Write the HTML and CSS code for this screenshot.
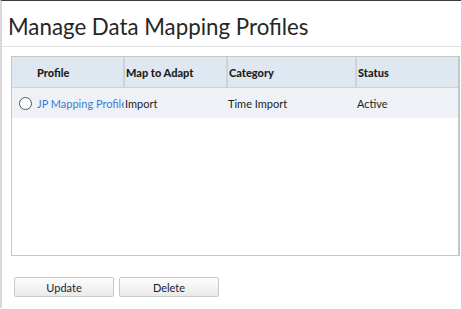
FILE: index.html
```html
<!DOCTYPE html>
<html lang="en">
<head>
    <meta charset="UTF-8">
    <meta name="viewport" content="width=device-width, initial-scale=1.0">
    <title>Manage Data Mapping Profiles</title>
    <link rel="stylesheet" href="styles.css">
</head>
<body>
    <div class="page">
        <h1 class="title">Manage Data Mapping Profiles</h1>
        <div class="content">
            <div class="grid">
                <table class="profiles">
                    <colgroup>
                        <col class="col-radio">
                        <col class="col-profile">
                        <col class="col-map">
                        <col class="col-category">
                        <col class="col-status">
                    </colgroup>
                    <thead>
                        <tr>
                            <th class="no-sep"></th>
                            <th class="no-sep">Profile</th>
                            <th>Map to Adapt</th>
                            <th>Category</th>
                            <th>Status</th>
                        </tr>
                    </thead>
                    <tbody>
                        <tr>
                            <td><span class="radio"></span></td>
                            <td><a href="#" class="link">JP Mapping Profile</a></td>
                            <td>Import</td>
                            <td>Time Import</td>
                            <td>Active</td>
                        </tr>
                    </tbody>
                </table>
            </div>
            <div class="actions">
                <button class="btn">Update</button>
                <button class="btn">Delete</button>
            </div>
        </div>
    </div>
</body>
</html>
```

FILE: styles.css
```css
body {
    margin: 0;
    font-family: Lato, "Open Sans", sans-serif;
    background: #fff;
    color: #222;
}
.page {
    height: 308px;
    border-top: 1px solid #3a3a3a;
    border-left: 2px solid #d9d9d9;
    box-sizing: border-box;
}
.title {
    margin: 0;
    padding: 12px 0 0 6px;
    height: 33px;
    font-size: 22.3px;
    font-weight: normal;
    color: #262626;
    border-bottom: 1px solid #e0e0e0;
}
.content {
    padding: 9px 0 0 9px;
}
.grid {
    height: 198px;
    margin-right: 1px;
    border: 1px solid #c6c6c6;
    border-right-width: 2px;
}
.profiles {
    width: 100%;
    border-collapse: collapse;
    table-layout: fixed;
    font-size: 11px;
}
.col-radio { width: 23px; }
.col-profile { width: 89px; }
.col-map { width: 103px; }
.col-category { width: 129px; }
.profiles th {
    height: 30px;
    padding: 0 1px;
    text-align: left;
    font-weight: 900;
    color: #1e1e1e;
    background: #dfe7f1;
    border-left: 2px solid #cfd3d8;
    border-bottom: 1px solid #cdd3da;
}
.profiles th.no-sep {
    border-left: none;
    padding-left: 2px;
}
.profiles td {
    height: 30px;
    padding: 0 1px;
    background: #eef2f7;
    white-space: nowrap;
    overflow: hidden;
}
.profiles td:first-child {
    padding: 0 0 0 7px;
}
.profiles td:nth-child(2) {
    padding-left: 2px;
}
.radio {
    display: block;
    width: 11px;
    height: 11px;
    border: 1px solid #555;
    border-radius: 50%;
    background: #fff;
}
.link {
    color: #3b7bd4;
    text-decoration: none;
}
.actions {
    display: flex;
    gap: 5px;
    padding: 21px 0 0 3px;
}
.btn {
    width: 100px;
    height: 20px;
    padding: 0;
    font-family: inherit;
    font-size: 11px;
    color: #1a1a3a;
    background: linear-gradient(to bottom, #fdfdfd, #eaeaea);
    border: 1px solid #c9c9c9;
    border-radius: 2px;
}
```
